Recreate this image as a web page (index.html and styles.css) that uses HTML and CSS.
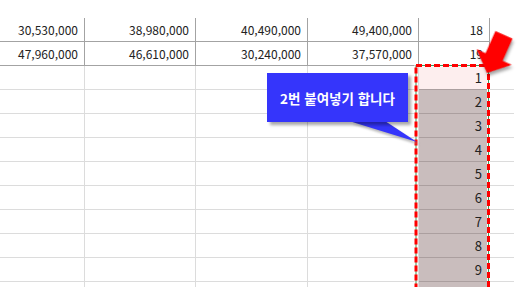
FILE: index.html
```html
<!DOCTYPE html>
<html lang="ko">
<head>
<meta charset="utf-8">
<link rel="stylesheet" href="styles.css">
</head>
<body>
<div class="sheet">
  <div class="row">
    <div class="c hd">30,530,000</div><div class="c hd">38,980,000</div><div class="c hd">40,490,000</div><div class="c hd">49,400,000</div><div class="c hd">18</div><div class="e"></div>
  </div>
  <div class="row">
    <div class="c hd">47,960,000</div><div class="c hd">46,610,000</div><div class="c hd">30,240,000</div><div class="c hd">37,570,000</div><div class="c hd">19</div><div class="e"></div>
  </div>
  <div class="row"><div class="c"></div><div class="c"></div><div class="c"></div><div class="c"></div><div class="c sel first">1</div><div class="c end"></div></div>
  <div class="row"><div class="c"></div><div class="c"></div><div class="c"></div><div class="c"></div><div class="c sel">2</div><div class="c end"></div></div>
  <div class="row"><div class="c"></div><div class="c"></div><div class="c"></div><div class="c"></div><div class="c sel">3</div><div class="c end"></div></div>
  <div class="row"><div class="c"></div><div class="c"></div><div class="c"></div><div class="c"></div><div class="c sel">4</div><div class="c end"></div></div>
  <div class="row"><div class="c"></div><div class="c"></div><div class="c"></div><div class="c"></div><div class="c sel">5</div><div class="c end"></div></div>
  <div class="row"><div class="c"></div><div class="c"></div><div class="c"></div><div class="c"></div><div class="c sel">6</div><div class="c end"></div></div>
  <div class="row"><div class="c"></div><div class="c"></div><div class="c"></div><div class="c"></div><div class="c sel">7</div><div class="c end"></div></div>
  <div class="row"><div class="c"></div><div class="c"></div><div class="c"></div><div class="c"></div><div class="c sel">8</div><div class="c end"></div></div>
  <div class="row"><div class="c"></div><div class="c"></div><div class="c"></div><div class="c"></div><div class="c sel">9</div><div class="c end"></div></div>
  <div class="row"><div class="c"></div><div class="c"></div><div class="c"></div><div class="c"></div><div class="c sel"></div><div class="c end"></div></div>
</div>

<svg class="overlay" width="523" height="287" viewBox="0 0 523 287" xmlns="http://www.w3.org/2000/svg">
  <rect x="416" y="65.5" width="72.5" height="260" fill="none" stroke="#ffffff" stroke-width="3"/>
  <rect x="416" y="65.5" width="72.5" height="260" fill="none" stroke="#3f9a5a" stroke-width="1"/>
  <rect x="416" y="65.5" width="72.5" height="260" fill="none" stroke="#ff0000" stroke-width="3" stroke-dasharray="6 3"/>
  <polygon class="shadow" points="352,124 388,124 420,145" fill="#9a9a9a"/>
  <polygon points="349,121 385,121 417,142" fill="#3535fb"/>
  <g class="arrow" transform="translate(487 73) rotate(24) scale(1.1)">
    <polygon points="0,0 17.5,-16 8.5,-16 8.5,-38 -8.5,-38 -8.5,-16 -17.5,-16" fill="#ff0000"/>
  </g>
</svg>

<div class="callout">2번 붙여넣기 합니다</div>
</body>
</html>
```

FILE: styles.css
```css
html, body {
  margin: 0;
  padding: 0;
  background: #ffffff;
}

body {
  width: 523px;
  height: 287px;
  overflow: hidden;
  position: relative;
  font-family: "Noto Sans CJK KR", "Noto Sans", sans-serif;
}

.sheet {
  padding-top: 18px;
}

.row {
  display: grid;
  grid-template-columns: 85px 111px 112px 111px 71px 24px;
  height: 24px;
}

.c {
  box-sizing: border-box;
  border-right: 1px solid #dcdcdc;
  border-bottom: 1px solid #dcdcdc;
  text-align: right;
  padding-right: 6px;
  font-size: 12px;
  line-height: 23px;
  color: #222222;
}

.c.hd {
  border-right-color: #a3a3a3;
  border-bottom-color: #a3a3a3;
}

.c.sel {
  background: #c9bdbd;
  border-bottom-color: #ab9f9f;
  padding-right: 7px;
  font-size: 13px;
}

.c.sel.first {
  background: #fdeeee;
}

.c.end {
  border-right: none;
}

.e {
  background: transparent;
}

.overlay {
  position: absolute;
  left: 0;
  top: 0;
}

.shadow {
  filter: blur(1px);
  opacity: 0.7;
}

.arrow {
  filter: drop-shadow(2px 2px 1.5px rgba(0, 0, 0, 0.35));
}

.callout {
  position: absolute;
  left: 267px;
  top: 73px;
  width: 141px;
  height: 49px;
  background: #3535fb;
  color: #ffffff;
  font-weight: 700;
  font-size: 13.5px;
  display: flex;
  align-items: center;
  justify-content: center;
  box-shadow: 3px 3px 3px rgba(0, 0, 0, 0.35);
}
```
